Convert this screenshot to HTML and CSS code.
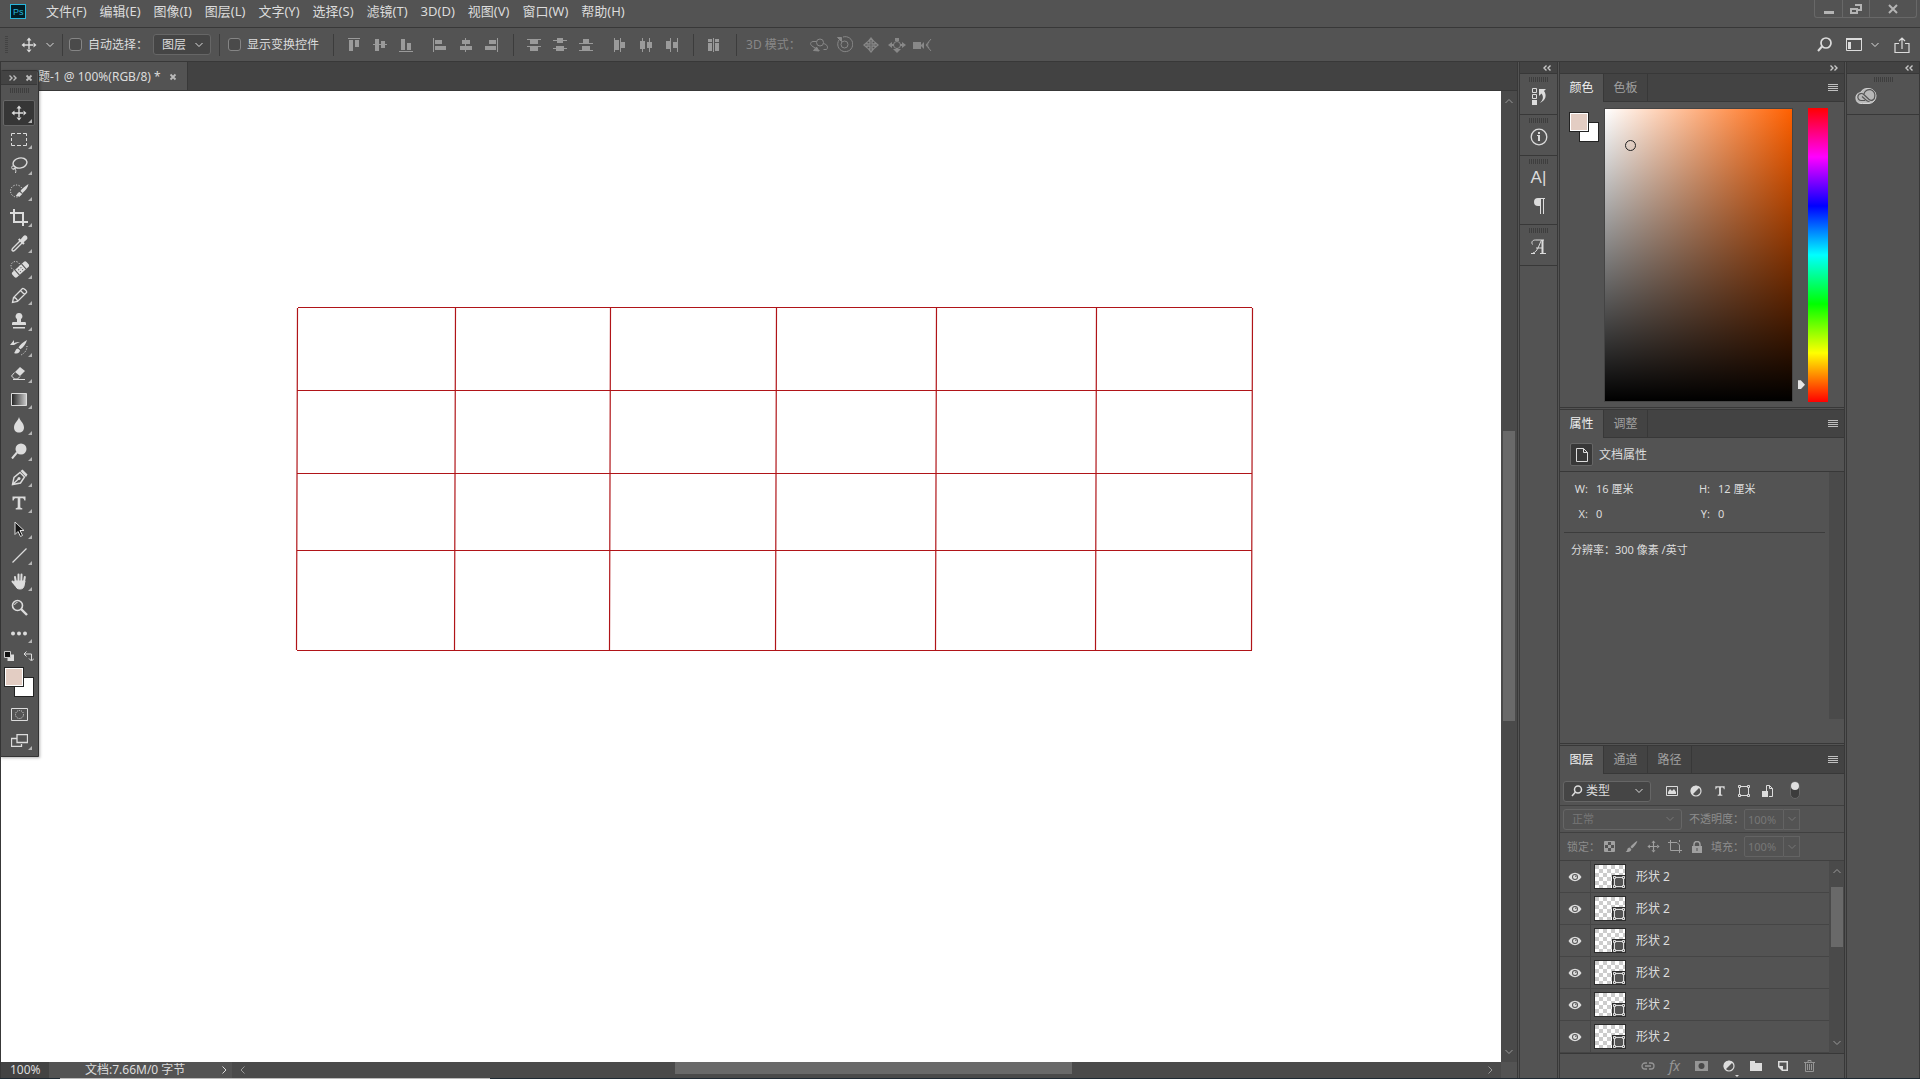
FILE: index.html
```html
<!DOCTYPE html>
<html lang="zh-CN">
<head>
    <meta charset="UTF-8">
    <title>题-1 @ 100%(RGB/8)</title>
    <link rel="stylesheet" href="styles.css">
</head>
<body>
    <!-- shared icons -->
    <svg class="sprite" aria-hidden="true">
        <symbol id="chevron" viewBox="0 0 10 10"><path d="M1.500 3L5 6.500 8.500 3" fill="none" stroke="currentColor"/></symbol>
        <symbol id="up" viewBox="0 0 10 10"><path d="M1.500 7L5 3.500 8.500 7" fill="none" stroke="currentColor"/></symbol>
        <symbol id="left" viewBox="0 0 10 10"><path d="M6.500 1.500L3 5l3.500 3.500" fill="none" stroke="currentColor"/></symbol>
        <symbol id="right" viewBox="0 0 10 10"><path d="M3.500 1.500L7 5l-3.500 3.500" fill="none" stroke="currentColor"/></symbol>
        <symbol id="collapse" viewBox="0 0 8 6"><path d="M3.500 .5L1 3l2.500 2.500M7.500 .5L5 3l2.500 2.500" fill="none" stroke="currentColor" stroke-width="1.400"/></symbol>
        <symbol id="expand" viewBox="0 0 8 6"><path d="M.5 .5L3 3 .5 5.500M4.500 .5L7 3 4.500 5.500" fill="none" stroke="currentColor" stroke-width="1.400"/></symbol>
        <symbol id="close" viewBox="0 0 8 8"><path d="M1.500 1.500l5 5M6.500 1.500l-5 5" fill="none" stroke="currentColor" stroke-width="1.800"/></symbol>
        <symbol id="lines" viewBox="0 0 10 8"><path d="M0 .5h10M0 2.500h10M0 4.500h10M0 6.500h10" stroke="currentColor"/></symbol>
        <symbol id="move" viewBox="0 0 16 16"><path d="M7.300 3h1.400v4.300H13v1.400H8.700V13H7.300V8.700H3V7.300h4.300zM8 .5L10.500 3.500h-5zM8 15.500l2.500-3h-5zM.5 8l3-2.500v5zM15.500 8l-3-2.500v5z"/></symbol>
        <symbol id="half" viewBox="0 0 12 12"><circle cx="6" cy="6" r="5" fill="none" stroke="currentColor" stroke-width="1.200"/><path d="M2.300 9.700A5.200 5.200 0 0 1 9.700 2.300z"/></symbol>
        <symbol id="shape" viewBox="0 0 12 12"><g fill="none" stroke="currentColor"><path d="M3 1.500h6M3 10.500h6M1.500 3v6M10.500 3v6"/><path d="M.5 .5h2v2h-2zM9.500 .5h2v2h-2zM.5 9.500h2v2h-2zM9.500 9.500h2v2h-2z"/></g></symbol>
        <symbol id="eye" viewBox="0 0 14 10"><path d="M7 .8C3.800 .8 1.700 3 .5 5 1.700 7 3.800 9.200 7 9.200S12.300 7 13.500 5C12.300 3 10.200 .8 7 .8zM7 8a3 3 0 1 1 0-6 3 3 0 0 1 0 6z"/><circle cx="7" cy="5" r="2"/><circle cx="7.800" cy="4.200" r=".7" fill="#535353"/></symbol>
        <symbol id="brush" viewBox="0 0 16 16"><path d="M15.300 .8C12 2.500 8.500 6 6.600 8.500l2 1.900C11.200 8.200 14.500 4.500 15.300 .8zM5.800 9.300c-2 0-2.700 1.300-3 2.600-.3 1.300-1 1.900-2.100 2.100 2.600 1.300 6.600 .9 7.100-2.700z"/></symbol>
        <symbol id="type" viewBox="0 0 14 14"><path d="M.5 .5h13v4h-1.200c-.2-1.700-.8-2.300-2.600-2.300H8.300v8.600c0 1 .4 1.300 2 1.400v1.300H3.700v-1.300c1.600-.1 2-.4 2-1.400V2.200H4.300C2.500 2.200 1.900 2.800 1.700 4.500H.5z"/></symbol>
    </svg>

    <header class="menubar">
        <svg class="logo" viewBox="0 0 16 15"><rect x=".5" y=".5" width="15" height="14" fill="#001d26" stroke="#29b6dc"/><text x="3" y="11">Ps</text></svg>
        <nav class="menus">
            <button>文件(F)</button>
            <button>编辑(E)</button>
            <button>图像(I)</button>
            <button>图层(L)</button>
            <button>文字(Y)</button>
            <button>选择(S)</button>
            <button>滤镜(T)</button>
            <button>3D(D)</button>
            <button>视图(V)</button>
            <button>窗口(W)</button>
            <button>帮助(H)</button>
        </nav>
        <div class="window-controls">
            <button aria-label="最小化"><svg width="10" height="14"><path d="M0 9h10v3H0z"/></svg></button>
            <button aria-label="还原"><svg width="12" height="12"><path d="M5 2h6v5H8M1 6h6v4H1z" fill="none" stroke="currentColor" stroke-width="2"/></svg></button>
            <button aria-label="关闭"><svg width="10" height="10"><path d="M1 1l8 8M9 1L1 9" stroke="currentColor" stroke-width="2"/></svg></button>
        </div>
    </header>

    <div class="options">
        <span class="grip-v"></span>
        <button class="current-tool" aria-label="移动工具">
            <svg width="16" height="16"><use href="#move"/></svg>
            <svg width="10" height="10"><use href="#chevron"/></svg>
        </button>
        <div class="opt-group">
            <label><input type="checkbox"> 自动选择：</label>
            <span class="pick pick-target">
                <select aria-label="自动选择"><option>图层</option><option>组</option></select>
                <svg width="10" height="10"><use href="#chevron"/></svg>
            </span>
        </div>
        <div class="opt-group opt-transform">
            <label><input type="checkbox"> 显示变换控件</label>
        </div>
        <div class="opt-group align">
            <button aria-label="顶对齐"><svg width="12" height="14"><path d="M0 0h12v1H0zM1 2h4v11H1zM7 2h4v7H7z"/></svg></button>
            <button aria-label="垂直居中对齐"><svg width="14" height="14"><path d="M0 6h14v1H0zM2 1h4v12H2zM8 3h4v7H8z"/></svg></button>
            <button aria-label="底对齐"><svg width="14" height="14"><path d="M0 13h14v1H0zM2 1h4v11H2zM8 5h4v7H8z"/></svg></button>
            <button class="gap-before" aria-label="左对齐"><svg width="14" height="14"><path d="M0 0h1v14H0zM2 2h7v4H2zM2 8h11v4H2z"/></svg></button>
            <button aria-label="水平居中对齐"><svg width="12" height="14"><path d="M5 0h1v14H5zM2 2h8v4H2zM0 8h12v4H0z"/></svg></button>
            <button aria-label="右对齐"><svg width="14" height="14"><path d="M12 0h1v14h-1zM4 2h7v4H4zM0 8h11v4H0z"/></svg></button>
        </div>
        <div class="opt-group align">
            <button aria-label="按顶分布"><svg width="14" height="12"><path d="M0 0h14v1H0zM3 1h8v4H3zM0 7h14v1H0zM3 8h8v4H3z"/></svg></button>
            <button aria-label="垂直居中分布"><svg width="14" height="13"><path d="M0 2h14v1H0zM4 0h6v5H4zM0 10h14v1H0zM3 8h8v5H3z"/></svg></button>
            <button aria-label="按底分布"><svg width="14" height="12"><path d="M0 4h14v1H0zM4 0h6v4H4zM0 11h14v1H0zM3 7h8v4H3z"/></svg></button>
            <button class="gap-before" aria-label="按左分布"><svg width="12" height="14"><path d="M0 0h1v14H0zM1 2h4v10H1zM6 0h1v14H6zM7 4h4v6H7z"/></svg></button>
            <button aria-label="水平居中分布"><svg width="12" height="14"><path d="M2 0h1v14H2zM0 3h5v8H0zM9 0h1v14H9zM7 4h5v6H7z"/></svg></button>
            <button aria-label="按右分布"><svg width="12" height="14"><path d="M4 0h1v14H4zM0 3h4v8H0zM11 0h1v14h-1zM7 4h4v6H7z"/></svg></button>
        </div>
        <div class="opt-group distribute">
            <button aria-label="自动对齐图层"><svg width="12" height="14"><path d="M0 1h4v3H0zM0 5h4v8H0zM5 0h1v14H5zM7 1h4v3H7zM7 5h4v8H7z"/></svg></button>
        </div>
        <div class="opt-group mode3d">
            <span>3D 模式：</span>
            <button aria-label="旋转 3D 对象"><svg width="18" height="14" fill="none" stroke="currentColor"><circle cx="10" cy="4.500" r="3.500"/><path d="M6.500 3.500H3C0 4 0 6.500 2 8l3 2M13.500 5.500c4 1 5 4 3 6h-3M9.500 12.500H6"/><path d="M3.500 12.500L9 13 6.500 9z" fill="currentColor"/></svg></button>
            <button aria-label="滚动 3D 对象"><svg width="17" height="17" fill="none" stroke="currentColor"><circle cx="8.500" cy="8.500" r="3.500"/><path d="M3 4a7.500 7.500 0 1 0 4-3"/><path d="M1.500 1.500h4v4z" fill="currentColor"/></svg></button>
            <button aria-label="拖动 3D 对象"><svg width="16" height="16" viewBox="0 0 16 16"><path d="M7 7V4H5.500L8 1l2.500 3H9v3h3V5.500L15 8l-3 2.500V9H9v3h1.500L8 15l-2.500-3H7V9H4v1.500L1 8l3-2.500V7z" fill="none" stroke="currentColor" stroke-width="1.300"/></svg></button>
            <button aria-label="滑动 3D 对象"><svg width="18" height="16" viewBox="0 0 18 16"><circle cx="9" cy="8" r="3.500" fill="none" stroke="currentColor"/><path d="M0 8l4-3v2h2v2H4v2zM18 8l-4-3v2h-2v2h2v2zM7 1h4v3H7zM9 16l-4-4h3v-1h2v1h3z"/></svg></button>
            <button aria-label="缩放 3D 对象"><svg width="19" height="14"><path d="M0 4h8v7H0zM8 7l3-3v7L8 8z"/><path d="M18 1l-5 6 5 6M16 4a4 4 0 0 0 0 6" fill="none" stroke="currentColor"/></svg></button>
        </div>
        <div class="options-right">
            <button aria-label="搜索"><svg width="15" height="15"><circle cx="9" cy="6" r="5" fill="none" stroke="currentColor" stroke-width="1.700"/><path d="M5 9.500L1 14" stroke="currentColor" stroke-width="2"/></svg></button>
            <button aria-label="工作区"><svg width="16" height="13"><path d="M.5 1v11.500h15V1z" fill="none" stroke="currentColor"/><path d="M0 0h16v2H0zM2 4h3v7H2z"/></svg><svg width="10" height="10"><use href="#chevron"/></svg></button>
            <button aria-label="共享"><svg width="16" height="16" fill="none" stroke="currentColor" stroke-width="1.200"><path d="M5 6.500H1v9h14v-9h-4M8 12V1M5 4l3-3 3 3"/></svg></button>
        </div>
    </div>

    <div class="workspace">
        <main class="document">
            <div class="doc-tabs">
                <div class="doc-tab"><span>题-1 @ 100%(RGB/8) *</span><button aria-label="关闭文档"><svg width="8" height="8"><use href="#close"/></svg></button></div>
            </div>
            <div class="doc-view">
                <svg class="canvas" fill="none" stroke="#b01418">
                    <path d="M297 216.500h954M296 299.500h955M296 382.500h955M296 459.500h955M296 559.500h955"/>
                    <path d="M296.500 217L295.500 559M454.500 217l-1 342M609.500 217l-1 342M775.500 217l-1 342M935.500 217l-1 342M1095.500 217l-1 342M1251.500 217l-1 342" stroke-width="1.200"/>
                </svg>
                <div class="scroll-v">
                    <svg width="10" height="10"><use href="#up"/></svg>
                    <div class="rail"><div class="handle"></div></div>
                    <svg width="10" height="10"><use href="#chevron"/></svg>
                </div>
            </div>
            <div class="status">
                <input class="zoom" type="text" value="100%" aria-label="缩放">
                <div class="doc-info"><span>文档:7.66M/0 字节</span><svg width="10" height="10"><use href="#right"/></svg></div>
                <div class="scroll-h">
                    <svg width="10" height="10"><use href="#left"/></svg>
                    <div class="rail"><div class="handle"></div></div>
                    <svg width="10" height="10"><use href="#right"/></svg>
                </div>
                <div class="corner"></div>
            </div>
        </main>

        <aside class="dock dock-icons">
            <div class="dock-head"><svg width="8" height="6"><use href="#collapse"/></svg></div>
            <div class="dock-group"><span class="grip"></span>
                <button aria-label="历史记录"><svg width="16" height="18"><path d="M1.500 1.500h4v4h-4zM1.500 7.500h4v4h-4z" fill="none" stroke="currentColor"/><path d="M1 13h5v5H1zM8 2h7l-2 2c3 4 2 9-4 12 3-3 4-6 1.500-9.500L8 9z"/></svg></button>
            </div>
            <div class="dock-group"><span class="grip"></span>
                <button aria-label="信息"><svg width="18" height="18"><circle cx="9" cy="9" r="7.800" fill="none" stroke="currentColor" stroke-width="1.300"/><path d="M8 4h2v2H8zM7 7h3v6H8V8H7z"/></svg></button>
            </div>
            <div class="dock-group"><span class="grip"></span>
                <button class="letter-sans" aria-label="字符">A|</button>
                <button aria-label="段落"><svg width="12" height="16"><path d="M5 0h7v1h-1v15h-1V1H8v15H7V8H5a4 4 0 0 1 0-8z"/></svg></button>
            </div>
            <div class="dock-group"><span class="grip"></span>
                <button aria-label="字形"><svg width="16" height="16" fill="none" stroke="currentColor"><path d="M1.500 5.500C0 3 1.500 1 4.500 1H13M10.500 1C8 6 6.500 13 2 14M5 9h6"/><path d="M11.500 1v13" stroke-width="2"/><path d="M0 14.500h4M9 14.500h6"/></svg></button>
            </div>
        </aside>

        <aside class="dock dock-panels">
            <div class="dock-head"><svg width="8" height="6"><use href="#expand"/></svg></div>
            <section class="panel">
                <div class="tabs">
                    <button class="active">颜色</button><button>色板</button>
                    <svg class="panel-menu" width="10" height="8"><use href="#lines"/></svg>
                </div>
                <div class="color-body">
                    <div class="swatches"><i class="bg"></i><i class="fg"></i></div>
                    <div class="field"><i class="marker"></i></div>
                    <input class="hue" type="range" min="0" max="360" value="344" aria-label="色相">
                </div>
            </section>
            <section class="panel properties">
                <div class="tabs">
                    <button class="active">属性</button><button>调整</button>
                    <svg class="panel-menu" width="10" height="8"><use href="#lines"/></svg>
                </div>
                <div class="prop-title">
                    <span class="doc-icon"><svg width="12" height="14"><path d="M.5 .5h7l4 4v9H.5zM7.500 .5v4h4" fill="none" stroke="currentColor"/></svg></span>
                    文档属性
                </div>
                <div class="prop-scroll">
                    <div class="prop-body">
                        <dl>
                            <dt>W:</dt><dd>16 厘米</dd>
                            <dt>H:</dt><dd>12 厘米</dd>
                            <dt>X:</dt><dd>0</dd>
                            <dt>Y:</dt><dd>0</dd>
                        </dl>
                        <p>分辨率：300 像素 /英寸</p>
                    </div>
                </div>
            </section>
            <section class="panel">
                <div class="tabs">
                    <button class="active">图层</button><button>通道</button><button>路径</button>
                    <svg class="panel-menu" width="10" height="8"><use href="#lines"/></svg>
                </div>
                <div class="layer-row filter">
                    <span class="pick pick-kind">
                        <svg class="lens" width="12" height="12"><circle cx="7" cy="4.500" r="3.500" fill="none" stroke="currentColor" stroke-width="1.500"/><path d="M4.500 7L1 11" stroke="currentColor" stroke-width="1.500"/></svg>
                        <select aria-label="滤镜类型"><option>类型</option></select>
                        <svg width="10" height="10"><use href="#chevron"/></svg>
                    </span>
                    <div class="filter-icons">
                        <button aria-label="像素图层"><svg width="12" height="10"><path d="M.5 .5h11v9H.5z" fill="none" stroke="currentColor"/><path d="M2 8V6l2-3 2 2 2-2 2 3v2z"/></svg></button>
                        <button aria-label="调整图层"><svg width="12" height="12"><use href="#half"/></svg></button>
                        <button aria-label="文字图层"><svg width="10" height="10"><use href="#type"/></svg></button>
                        <button aria-label="形状图层"><svg width="12" height="12"><use href="#shape"/></svg></button>
                        <button aria-label="智能对象"><svg width="12" height="12"><path d="M4.500 6V.5h3l3 3v8H7M7.500 .5v3h3" fill="none" stroke="currentColor"/><path d="M0 6h6v6H0z"/></svg></button>
                        <button class="toggle" aria-label="打开或关闭图层过滤"><i></i></button>
                    </div>
                </div>
                <div class="layer-row muted">
                    <span class="pick pick-blend">
                        <select aria-label="混合模式" disabled><option>正常</option></select>
                        <svg width="10" height="10"><use href="#chevron"/></svg>
                    </span>
                    <label class="percent">不透明度：<input type="text" value="100%" disabled></label>
                    <button class="drop" aria-label="不透明度滑块" disabled><svg width="10" height="10"><use href="#chevron"/></svg></button>
                </div>
                <div class="layer-row muted locks">
                    <span class="lock-label">锁定：</span>
                    <div class="lock-icons">
                        <button aria-label="锁定透明像素"><svg width="11" height="11"><path d="M.5 .5h10v10H.5z" fill="none" stroke="currentColor"/><path d="M1 1h3v3H1zM7 1h3v3H7zM4 4h3v3H4zM1 7h3v3H1zM7 7h3v3H7z"/></svg></button>
                        <button aria-label="锁定图像像素"><svg width="13" height="13"><use href="#brush"/></svg></button>
                        <button aria-label="锁定位置"><svg width="13" height="13"><use href="#move"/></svg></button>
                        <button aria-label="防止嵌套"><svg width="14" height="13"><path d="M0 2.500h9l2.500 2.500v8M2.500 0v10.500H14M11.500 0v2" fill="none" stroke="currentColor"/></svg></button>
                        <button aria-label="锁定全部"><svg width="10" height="12"><path d="M0 5h10v7H0z"/><path d="M2 6V3.500a3 3 0 0 1 6 0V6" fill="none" stroke="currentColor" stroke-width="1.500"/><path d="M4.500 7h1v3h-1z" fill="#535353"/></svg></button>
                    </div>
                    <label class="percent">填充：<input type="text" value="100%" disabled></label>
                    <button class="drop" aria-label="填充滑块" disabled><svg width="10" height="10"><use href="#chevron"/></svg></button>
                </div>
                <div class="layers">
                    <ul>
                        <li><span class="visible"><svg width="14" height="10"><use href="#eye"/></svg></span><span class="thumb"><i><svg width="12" height="12"><use href="#shape"/></svg></i></span>形状 2</li>
                        <li><span class="visible"><svg width="14" height="10"><use href="#eye"/></svg></span><span class="thumb"><i><svg width="12" height="12"><use href="#shape"/></svg></i></span>形状 2</li>
                        <li><span class="visible"><svg width="14" height="10"><use href="#eye"/></svg></span><span class="thumb"><i><svg width="12" height="12"><use href="#shape"/></svg></i></span>形状 2</li>
                        <li><span class="visible"><svg width="14" height="10"><use href="#eye"/></svg></span><span class="thumb"><i><svg width="12" height="12"><use href="#shape"/></svg></i></span>形状 2</li>
                        <li><span class="visible"><svg width="14" height="10"><use href="#eye"/></svg></span><span class="thumb"><i><svg width="12" height="12"><use href="#shape"/></svg></i></span>形状 2</li>
                        <li><span class="visible"><svg width="14" height="10"><use href="#eye"/></svg></span><span class="thumb"><i><svg width="12" height="12"><use href="#shape"/></svg></i></span>形状 2</li>
                    </ul>
                    <div class="scroll-v layer-scroll">
                        <svg width="10" height="10"><use href="#up"/></svg>
                        <div class="rail"><div class="handle"></div></div>
                        <svg width="10" height="10"><use href="#chevron"/></svg>
                    </div>
                </div>
                <footer class="layer-actions">
                    <button class="off" aria-label="链接图层"><svg width="14" height="8" fill="none" stroke="currentColor" stroke-width="1.300"><path d="M6 1H4a3 3 0 0 0 0 6h2M8 1h2a3 3 0 0 1 0 6H8M4 4h6"/></svg></button>
                    <button class="off fx" aria-label="图层样式">fx</button>
                    <button class="off" aria-label="图层蒙版"><svg width="13" height="10"><path d="M0 0h13v10H0z"/><circle cx="6.500" cy="5" r="3" fill="#484848"/></svg></button>
                    <button class="has-menu" aria-label="调整图层"><svg width="12" height="12"><use href="#half"/></svg></button>
                    <button aria-label="新建组"><svg width="12" height="10"><path d="M0 0h5v2h7v8H0z"/></svg></button>
                    <button aria-label="新建图层"><svg width="10" height="10"><path d="M0 0h10v10H4L0 6zM1.500 1.500V5H5v3.500h3.500v-7z" fill-rule="evenodd"/></svg></button>
                    <button class="off" aria-label="删除图层"><svg width="11" height="12" fill="none" stroke="currentColor"><path d="M0 2.500h11M4 2V.5h3V2M1.500 3v8.500h8V3M3.500 4v6M5.500 4v6M7.500 4v6"/></svg></button>
                </footer>
            </section>
        </aside>

        <aside class="dock dock-cloud">
            <div class="dock-head"><svg width="8" height="6"><use href="#collapse"/></svg></div>
            <div class="dock-group"><span class="grip"></span>
                <button aria-label="库"><svg width="22" height="16" fill="none"><path d="M7.500 15.500H6A5.500 5.500 0 0 1 5.500 4.600 8 8 0 0 1 13 .5a7.500 7.500 0 0 1 1 15z" fill="#b8b8b8" stroke="#d4d4d4"/><path d="M10 12.500H6.500a3.500 3.500 0 1 1 2.300-6l5 4.700c3 2.500 6 .3 6-3A5.500 5.500 0 0 0 9 6M7 8.500l4.500 4c.8 .6 1.700 1 3 1" stroke="#555" stroke-width="1.200"/></svg></button>
            </div>
        </aside>

        <aside class="toolbox">
            <div class="toolbox-head"><svg width="8" height="6"><use href="#expand"/></svg><svg width="8" height="8"><use href="#close"/></svg></div>
            <span class="grip"></span>
            <div class="tools">
                <button class="active" aria-label="移动"><svg width="16" height="16"><use href="#move"/></svg></button>
                <button aria-label="选框"><svg width="16" height="13"><path d="M.5 3V.5H4M6 .5h4M12 .5h3.500V3M15.500 5v3M15.500 10v2.500H12M10 12.500H6M4 12.500H.5V10M.5 8V5" fill="none" stroke="currentColor"/></svg></button>
                <button aria-label="套索"><svg width="18" height="16" fill="none" stroke="currentColor"><ellipse cx="10" cy="6" rx="7" ry="5" stroke-width="1.400" transform="rotate(-12 10 6)"/><circle cx="3.500" cy="10.500" r="1.800"/><path d="M5 12c1 1 1 2 .5 4M3 12l3-1"/></svg></button>
                <button aria-label="快速选择"><svg width="19" height="16"><circle cx="6.500" cy="8" r="6" fill="none" stroke="currentColor" stroke-dasharray="1.200 1.500"/><path d="M18.500 1C15 3 12 6 10.500 8l2 2C15.500 7.500 18 4.500 18.500 1zM9.700 9c-2 0-2.500 2.500-4 4 3 1 5.500 .5 6-2.200z"/></svg></button>
                <button aria-label="裁剪"><svg width="18" height="17"><path d="M0 4h13v13M4 0v13h14" fill="none" stroke="currentColor" stroke-width="2"/></svg></button>
                <button aria-label="吸管"><svg width="17" height="17"><path d="M9.500 4.500l3-3.500c2-2 5 1 3.500 3.200l-3.300 3 1 1-1.500 1.500L7 4.700l1.500-1.500z"/><path d="M9 6l-7 7c-1 1-1.200 2-.7 2.700S3 16 4 15l7-7" fill="none" stroke="currentColor" stroke-width="1.400"/></svg></button>
                <button aria-label="修复画笔"><svg width="19" height="18" viewBox="0 0 19 18"><circle cx="5.500" cy="6" r="4.500" fill="none" stroke="currentColor" stroke-dasharray="1.200 1.500"/><g transform="rotate(-42 10.500 9.500)"><rect x="1" y="6" width="19" height="7" rx="2"/><path d="M6 6v7M15 6v7" stroke="#535353"/><path d="M8.500 8h1v1h-1zM11.500 8h1v1h-1zM8.500 10.500h1v1h-1zM11.500 10.500h1v1h-1z" fill="#535353"/></g></svg></button>
                <button aria-label="铅笔"><svg width="17" height="17" fill="none" stroke="currentColor" stroke-width="1.300"><path d="M1.500 15.500l1-5 9-9c1-1 5 3 4 4l-9 9zM2.500 10.500c2 0 4 2 4 4M9.500 3.500l4 4"/></svg></button>
                <button aria-label="仿制图章"><svg width="14" height="16"><path d="M7 0a3.300 3.300 0 0 1 2 6v3h4c1 0 1 1 1 3H0c0-2 0-3 1-3h4V6A3.300 3.300 0 0 1 7 0zM1 14h12v1.500H1z"/></svg></button>
                <button aria-label="历史记录画笔"><svg width="18" height="17"><path d="M17 1c-4 2-7 5-8.500 7.500l2 1.700C13.500 8 16 5 17 1zM8 9.500c-2.500 0-2.500 3-4 4.500 3 1.300 6 0 6-2.700zM0 6l4-5v3c2-1 4-1 6-1C7 4 6 5 4 6z"/><path d="M17 7c0 4-2 7-6 9" fill="none" stroke="currentColor" stroke-dasharray="1 1.500"/></svg></button>
                <button aria-label="橡皮擦"><svg width="18" height="15"><path d="M10 1l5 4-5 5-5-4z"/><path d="M4.500 6.500L1.500 10l3 3h3L10 10.500M3 13.500h12" fill="none" stroke="currentColor"/></svg></button>
                <button aria-label="渐变"><svg width="16" height="13"><defs><linearGradient id="ramp"><stop stop-color="#222"/><stop offset="1" stop-color="#ccc"/></linearGradient></defs><path d="M.5 .5h15v12H.5z" fill="url(#ramp)" stroke="currentColor"/></svg></button>
                <button aria-label="模糊"><svg width="12" height="16"><path d="M6 0c1 4 5 6 5 10.500C11 13.500 9 15.500 6 15.500S1 13.500 1 10.500C1 6 5 4 6 0z"/></svg></button>
                <button aria-label="减淡"><svg width="16" height="16"><circle cx="10" cy="6" r="5.500"/><path d="M6 9.500l-5 6" stroke="currentColor" stroke-width="2"/></svg></button>
                <button aria-label="钢笔"><svg width="17" height="17"><path d="M1.500 15.500L3 8.500l6-5 4.500 4.500-4 6zM1.500 15.500L8 9.500" fill="none" stroke="currentColor" stroke-width="1.400"/><circle cx="8" cy="9.500" r="1.500"/><path d="M9.500 2L11.500 .5l5 5L15 8z"/></svg></button>
                <button aria-label="文字"><svg width="14" height="14"><use href="#type"/></svg></button>
                <button aria-label="路径选择"><svg width="12" height="17"><path d="M2 1v12.500l3-3 2.500 5 2-1-2.500-5h4z" fill="#161616" stroke="currentColor"/></svg></button>
                <button aria-label="直线"><svg width="15" height="15"><path d="M.5 14.500l14-14" stroke="currentColor" stroke-width="1.300"/></svg></button>
                <button aria-label="抓手"><svg width="17" height="17" fill="none" stroke="currentColor" stroke-linecap="round"><path d="M4.800 9L4 4M7.500 8V1.500M10.300 8L10.500 1.500M13 9l.8-5M4.500 12L1.500 8.500" stroke-width="2"/><path d="M4 8h10l-1 5c-.5 2-1.500 3-4 3-3 0-3.500-1-5-4z" fill="currentColor"/></svg></button>
                <button class="plain" aria-label="缩放"><svg width="17" height="17"><circle cx="6.500" cy="6.500" r="5" fill="none" stroke="currentColor" stroke-width="1.600"/><path d="M10 10l6 6" stroke="currentColor" stroke-width="2.400"/><path d="M3.500 6a3 3 0 0 1 3-2.500" fill="none" stroke="currentColor"/></svg></button>
                <button aria-label="编辑工具栏"><svg width="16" height="5"><circle cx="2" cy="2.500" r="2"/><circle cx="8" cy="2.500" r="2"/><circle cx="14" cy="2.500" r="2"/></svg></button>
            </div>
            <div class="swap">
                <svg width="10" height="10"><path d="M3.500 3.500H10V10H3.500z"/><path d="M.5 .5h6v6h-6z" fill="#111" stroke="#ccc"/></svg>
                <svg width="11" height="11"><path d="M2 3h6.500v6M3.500 .5L1 3l2.500 2.500M6 7.500L8.500 10 11 7.500" fill="none" stroke="currentColor"/></svg>
            </div>
            <div class="swatches"><i class="bg"></i><i class="fg"></i></div>
            <div class="tools">
                <button class="plain" aria-label="快速蒙版"><svg width="17" height="13"><path d="M.5 .5h16v12H.5z" fill="none" stroke="currentColor"/><circle cx="8.500" cy="6.500" r="4" fill="none" stroke="currentColor" stroke-dasharray="1 1"/></svg></button>
                <button aria-label="屏幕模式"><svg width="17" height="13"><path d="M6 4.500H.5v8h10V10" fill="none" stroke="currentColor" stroke-width="1.300"/><path d="M6 .5h10.500v8H6z" fill="none" stroke="currentColor" stroke-width="1.300"/></svg></button>
            </div>
        </aside>
    </div>
    <div class="taskbar"></div>
</body>
</html>
```

FILE: styles.css
```css
* {
    box-sizing: border-box;
}

body {
    margin: 0;
    height: 100vh;
    display: flex;
    flex-direction: column;
    overflow: hidden;
    background: #535353;
    color: #dcdcdc;
    font-family: "Noto Sans", "Noto Sans CJK SC", sans-serif;
    font-size: 12px;
    line-height: 16px;
}

button, input, select {
    margin: 0;
    padding: 0;
    border: 0;
    background: none;
    color: inherit;
    font: inherit;
}

button {
    display: flex;
    align-items: center;
    justify-content: center;
}

svg {
    display: block;
    flex: none;
    fill: currentColor;
}

svg[fill="none"] {
    fill: none;
}

.sprite {
    position: absolute;
    width: 0;
    height: 0;
}

/* menu bar */
.menubar {
    height: 28px;
    display: flex;
    align-items: flex-start;
    border-bottom: 1px solid #383838;
}

.logo {
    width: 16px;
    height: 15px;
    margin: 4px 14px 0 10px;
}

.logo text {
    fill: #29b6dc;
    font-family: "Liberation Sans", sans-serif;
    font-size: 9px;
}

.menus {
    display: flex;
    gap: 1px;
    font-size: 13px;
}

.menus button {
    height: 21px;
    padding: 0 6px;
}

.window-controls {
    display: flex;
    height: 18px;
    margin: 0 3px 0 auto;
    border: 1px solid #686868;
    border-top: 0;
    border-radius: 0 0 3px 3px;
    color: #b4b4b4;
}

.window-controls button {
    width: 27px;
}

.window-controls button + button {
    border-left: 1px solid #686868;
}

.window-controls button:last-child {
    width: 47px;
}

/* options bar */
.options {
    height: 34px;
    display: flex;
    align-items: center;
    border-bottom: 1px solid #383838;
}

.grip-v {
    width: 3px;
    height: 18px;
    margin: 0 13px 0 5px;
    background: repeating-linear-gradient(#434343 0 1px, transparent 1px 2px);
}

.current-tool {
    gap: 8px;
    margin-right: 7px;
}

.opt-group {
    display: flex;
    align-items: center;
    height: 22px;
    padding: 0 8px 0 6px;
    border-left: 1px solid #3c3c3c;
}

.opt-group label {
    display: flex;
    align-items: center;
    gap: 6px;
}

input[type="checkbox"] {
    appearance: none;
    width: 13px;
    height: 13px;
    border: 1px solid #858585;
    border-radius: 3px;
    background: #4a4a4a;
}

.opt-transform {
    padding: 0 14px 0 8px;
}

.pick {
    display: grid;
    grid-template-columns: 1fr 16px;
    align-items: center;
    height: 21px;
    border: 1px solid #666;
    border-radius: 3px;
    background: #454545;
}

.pick select {
    appearance: none;
    grid-area: 1 / 1 / 2 / 3;
    height: 19px;
    padding-left: 8px;
}

.pick > svg:last-child {
    grid-area: 1 / 2;
}

.pick-target {
    width: 58px;
    margin-left: 5px;
}

.align {
    padding: 0 8px 0 7px;
    color: #9a9a9a;
}

.align button {
    width: 26px;
    height: 22px;
}

.align .gap-before {
    margin-left: 8px;
}

.distribute {
    width: 43px;
    justify-content: center;
    color: #9a9a9a;
}

.mode3d {
    padding-left: 9px;
    color: #888;
}

.mode3d span {
    margin-right: 5px;
}

.mode3d button {
    width: 26px;
}

.options-right {
    display: flex;
    align-items: center;
    gap: 14px;
    margin-left: auto;
    padding-right: 10px;
}

.options-right button {
    gap: 8px;
}

/* workspace */
.workspace {
    position: relative;
    flex: 1;
    min-height: 0;
    display: flex;
}

.document {
    flex: 1;
    min-width: 0;
    display: flex;
    flex-direction: column;
    border-left: 1px solid #383838;
}

.doc-tabs {
    height: 29px;
    display: flex;
    background: #424242;
    border-bottom: 1px solid #383838;
}

.doc-tab {
    display: flex;
    align-items: center;
    gap: 8px;
    padding: 1px 10px 0 37px;
    background: #535353;
    border-right: 1px solid #383838;
}

.doc-tab button {
    color: #bbb;
}

.doc-view {
    flex: 1;
    min-height: 0;
    display: flex;
}

.canvas {
    flex: 1;
    min-width: 0;
    height: 100%;
    background: #fff;
}

.scroll-v {
    width: 16px;
    display: flex;
    flex-direction: column;
    align-items: center;
    padding: 5px 0;
    background: #4a4a4a;
    color: #999;
}

.rail {
    flex: 1;
    align-self: stretch;
}

.scroll-v .handle {
    width: 12px;
    height: 31%;
    margin: 0 auto;
    background: #696969;
}

.doc-view .rail {
    padding-top: 325px;
}

.doc-view .handle {
    height: 47%;
}

.status {
    height: 16px;
    display: flex;
    background: #4a4a4a;
}

.zoom {
    width: 48px;
    padding-left: 9px;
    background: #434343;
}

.doc-info {
    width: 183px;
    display: flex;
    align-items: center;
    justify-content: space-between;
    padding: 0 3px 0 36px;
    background: #535353;
}

.scroll-h {
    flex: 1;
    display: flex;
    align-items: center;
    padding: 0 6px;
    color: #999;
}

.scroll-h .rail {
    padding-left: 34%;
}

.scroll-h .handle {
    width: 49%;
    height: 12px;
    background: #696969;
}

.corner {
    width: 16px;
    background: #535353;
}

/* docks */
.dock {
    display: flex;
    flex-direction: column;
    border-left: 3px double #383838;
}

.dock-icons {
    width: 40px;
}

.dock-panels {
    width: 287px;
}

.dock-cloud {
    width: 76px;
    border-right: 1px solid #383838;
}

.dock-head {
    height: 12px;
    display: flex;
    justify-content: flex-end;
    align-items: center;
    padding-right: 6px;
    background: #434343;
    border-bottom: 1px solid #383838;
    color: #c8c8c8;
}

.dock-group {
    display: flex;
    flex-direction: column;
    align-items: center;
    padding: 3px 0 4px;
    border-bottom: 1px solid #383838;
}

.dock-group button {
    width: 36px;
    height: 28px;
}

.dock-cloud .dock-group button {
    align-self: flex-start;
    width: 38px;
}

.grip {
    display: block;
    width: 19px;
    height: 5px;
    background: repeating-linear-gradient(90deg, #3e3e3e 0 1px, transparent 1px 2px);
}

.letter-sans {
    font-family: "Liberation Sans", sans-serif;
    font-size: 17px;
}

.panel {
    border-bottom: 1px solid #383838;
}

.panel + .panel {
    margin-top: 1px;
    border-top: 1px solid #383838;
}

.panel:last-child {
    border-bottom: 0;
}

.tabs {
    height: 28px;
    display: flex;
    background: #434343;
    border-bottom: 1px solid #383838;
    color: #a0a0a0;
}

.tabs button {
    width: 44px;
    border-right: 1px solid #383838;
}

.tabs .active {
    height: 28px;
    background: #535353;
    color: #f0f0f0;
}

.panel-menu {
    margin: auto 6px auto auto;
    color: #c0c0c0;
}

.color-body {
    display: flex;
    padding: 6px 16px 5px 9px;
}

.swatches {
    position: relative;
    width: 30px;
    height: 30px;
}

.swatches i {
    position: absolute;
    width: 20px;
    height: 20px;
    border: 1px solid #222;
}

.swatches .fg {
    top: 0;
    left: 0;
    background: #e3cdc3;
    box-shadow: inset 0 0 0 1px #fff;
}

.swatches .bg {
    right: 0;
    bottom: 0;
    background: #fff;
}

.color-body .swatches {
    margin-top: 4px;
}

.field {
    position: relative;
    flex: 1;
    height: 294px;
    margin: 0 5px;
    border: 1px solid #444;
    background: linear-gradient(transparent, #000), linear-gradient(90deg, #fff, #ff6000);
}

.marker {
    position: absolute;
    top: 31px;
    left: 20px;
    width: 11px;
    height: 11px;
    border: 1px solid #222;
    border-radius: 50%;
}

.hue {
    appearance: none;
    writing-mode: vertical-lr;
    width: 30px;
    height: 294px;
    background: linear-gradient(#f00, #f0f, #00f, #0ff, #0f0, #ff0, #f00) right / 20px 100% no-repeat;
}

.hue::-webkit-slider-thumb {
    appearance: none;
    width: 7px;
    height: 9px;
    margin-right: 23px;
    background: #e6e6e6;
    clip-path: polygon(0 0, 40% 0, 100% 50%, 40% 100%, 0 100%);
}

.properties {
    flex: 1;
    min-height: 0;
    display: flex;
    flex-direction: column;
}

.properties .tabs {
    flex: none;
}

.prop-title {
    display: flex;
    align-items: center;
    gap: 6px;
    height: 34px;
    padding-left: 10px;
    border-bottom: 1px solid #383838;
}

.doc-icon {
    display: grid;
    place-items: center;
    width: 23px;
    height: 23px;
    border: 1px solid #666;
    border-radius: 2px;
    background: #383838;
}

.prop-scroll {
    flex: 1;
    margin-bottom: 24px;
    border-right: 15px solid #4a4a4a;
    font-size: 11px;
}

.prop-body {
    padding: 9px 4px;
}

.prop-body dl {
    display: grid;
    grid-template-columns: 20px 96px 20px 1fr;
    gap: 9px 3px;
    margin: 0;
    padding: 0 4px 10px;
    border-bottom: 1px solid #3c3c3c;
}

.prop-body dt {
    text-align: right;
}

.prop-body dd {
    margin: 0;
    padding-left: 5px;
}

.prop-body p {
    margin: 9px 7px;
}

/* layers panel */
.layer-row {
    display: flex;
    align-items: center;
    height: 27px;
    padding: 0 3px;
    border-bottom: 1px solid #404040;
}

.filter {
    height: 32px;
    padding-top: 3px;
}

.pick-kind {
    width: 88px;
}

.pick-kind .lens {
    grid-area: 1 / 1;
    margin-left: 7px;
}

.pick-kind select {
    padding-left: 22px;
}

.filter-icons {
    display: flex;
    margin-left: 9px;
}

.filter-icons button {
    width: 24px;
    height: 20px;
}

.filter-icons .toggle {
    align-items: flex-start;
    width: 10px;
    height: 18px;
    margin-left: 10px;
    border: 1px solid #666;
    border-radius: 5px;
    background: #3c3c3c;
}

.toggle i {
    width: 8px;
    height: 8px;
    border-radius: 50%;
    background: #e0e0e0;
}

.muted {
    color: #8c8c8c;
    font-size: 11px;
}

.locks {
    height: 28px;
}

.muted .pick {
    background: none;
    color: #777;
}

.muted select {
    opacity: 1;
}

.pick-blend {
    width: 119px;
}

.percent {
    display: flex;
    align-items: center;
    margin-left: auto;
}

.percent input {
    width: 40px;
    height: 21px;
    padding-left: 3px;
    border: 1px solid #636363;
    border-radius: 2px 0 0 2px;
    color: #777;
}

.drop {
    width: 16px;
    height: 21px;
    margin-right: 41px;
    border: 1px solid #636363;
    border-left: 0;
    color: #777;
}

.lock-label {
    width: 32px;
    padding-left: 4px;
    white-space: nowrap;
}

.lock-icons {
    display: flex;
    margin-left: 3px;
    color: #a0a0a0;
}

.lock-icons button {
    width: 22px;
    height: 20px;
}

.layers {
    display: flex;
}

.layers ul {
    flex: 1;
    margin: 0;
    padding: 0;
    list-style: none;
}

.layers li {
    display: flex;
    align-items: center;
    height: 32px;
    border-bottom: 1px solid #454545;
}

.visible {
    display: grid;
    place-items: center;
    width: 31px;
    height: 31px;
    border-right: 1px solid #454545;
}

.thumb {
    display: flex;
    align-items: flex-end;
    justify-content: flex-end;
    width: 32px;
    height: 25px;
    margin: 0 10px 0 3px;
    border: 1px solid #2c2c2c;
    background: repeating-conic-gradient(#fff 0 25%, #ccc 0 50%) 0 0 / 8px 8px;
}

.thumb i {
    border: 1px solid #2c2c2c;
    border-width: 1px 0 0 1px;
    background: #535353;
}

.layer-scroll {
    width: 15px;
}

.layer-scroll .handle {
    height: 60px;
    margin-top: 11px;
}

.layer-actions {
    display: flex;
    align-items: center;
    justify-content: flex-end;
    height: 25px;
    padding-right: 21px;
    border-top: 1px solid #383838;
}

.layer-actions button {
    width: 27px;
    height: 22px;
}

.layer-actions .off {
    color: #959595;
}

.has-menu {
    position: relative;
}

.has-menu::after {
    content: "";
    position: absolute;
    right: 3px;
    bottom: 0;
    border: 2px solid transparent;
    border-top-color: #dcdcdc;
    border-bottom: 0;
}

.fx {
    font-size: 14px;
    font-style: italic;
}

/* floating toolbox */
.toolbox {
    position: absolute;
    top: 8px;
    left: 0;
    width: 39px;
    display: flex;
    flex-direction: column;
    align-items: center;
    padding: 0 1px 3px 0;
    border: 1px solid #333;
    border-radius: 3px 3px 0 0;
    background: #535353;
    box-shadow: 1px 1px 3px rgba(0, 0, 0, 0.300);
}

.toolbox-head {
    align-self: stretch;
    display: flex;
    align-items: center;
    justify-content: space-between;
    height: 14px;
    padding: 0 4px 0 8px;
    background: #434343;
    border-bottom: 1px solid #383838;
    color: #bbb;
}

.toolbox .grip {
    margin: 3px 0 7px;
}

.tools button {
    position: relative;
    width: 32px;
    height: 26px;
    border: 1px solid transparent;
    border-radius: 2px;
}

.tools .active {
    border-color: #666;
    background: #363636;
}

.tools button::after {
    content: "";
    position: absolute;
    right: 2px;
    bottom: 2px;
    border: 2px solid;
    border-color: transparent #b4b4b4 #b4b4b4 transparent;
}

.tools .plain::after {
    display: none;
}

.swap {
    display: flex;
    justify-content: space-between;
    align-items: center;
    width: 30px;
    height: 20px;
}

.toolbox .swatches {
    margin: 1px 0 4px;
}

/* edge of the desktop taskbar */
.taskbar {
    height: 1px;
    background: linear-gradient(90deg, #1f2a33 60px, #bbb 60px 490px, #1f2a33 490px);
}
```
